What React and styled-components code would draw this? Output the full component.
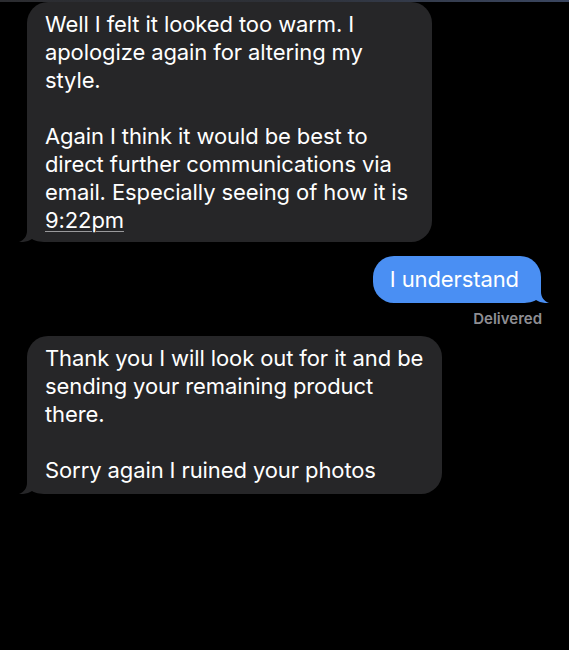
import React from "react";
import styled, { createGlobalStyle } from "styled-components";

const Global = createGlobalStyle`
  html, body { margin: 0; padding: 0; background: #000; }
  body { font-family: Inter, "Noto Sans", sans-serif; -webkit-font-smoothing: antialiased; }
`;

const Screen = styled.div`
  width: 569px;
  height: 650px;
  background: #000;
  display: flex;
  flex-direction: column;
  overflow: hidden;
`;

const TopBar = styled.div`
  height: 2px;
  background: linear-gradient(90deg, #2b2c30 0%, #2e3138 50%, #3a4660 100%);
`;

const Row = styled.div`
  display: flex;
  justify-content: ${(p) => (p.$me ? "flex-end" : "flex-start")};
  padding: ${(p) => (p.$me ? "0 28px 0 0" : "0 0 0 27px")};
  margin-top: ${(p) => p.$top || 0}px;
`;

const Bubble = styled.div`
  position: relative;
  width: ${(p) => (p.$w ? p.$w + "px" : "auto")};
  box-sizing: border-box;
  background: ${(p) => (p.$me ? "#4a8ff3" : "#262628")};
  color: #fff;
  border-radius: 21px;
  padding: ${(p) => p.$pad};
  font-size: 22px;
  line-height: 28px;
  letter-spacing: -0.1px;
  white-space: nowrap;
`;

const Text = styled.span`
  position: relative;
  z-index: 1;
`;

const Tail = styled.svg`
  position: absolute;
  bottom: 0;
  z-index: 0;
  ${(p) => (p.$me ? "right: -8px; transform: scaleX(-1);" : "left: -8px;")}
  width: 28px;
  height: 22px;
`;

const Link = styled.span`
  text-decoration: underline;
  text-decoration-color: #9a9a9c;
  text-decoration-thickness: 1px;
  text-underline-offset: 3px;
`;

const Status = styled.div`
  align-self: flex-end;
  margin: 7px 27px 0 0;
  font-size: 15px;
  line-height: 18px;
  font-weight: 600;
  color: #8e8e93;
`;

const TailShape = ({ me, color }) => (
  <Tail $me={me} viewBox="0 0 28 22">
    <path
      d="M8 0 L8 11 C8 16 5 20 0 22 C5 22.5 10 21 13 19 C16 21 20 22 28 22 L28 0 Z"
      fill={color}
    />
  </Tail>
);

export default function App() {
  return (
    <>
      <Global />
      <Screen>
        <TopBar />
        <Row>
          <Bubble $w={405} $pad="8px 18px 8px 18px">
            <TailShape color="#262628" />
            <Text>
              Well I felt it looked too warm. I<br />
              apologize again for altering my<br />
              style.<br />
              <br />
              Again I think it would be best to<br />
              direct further communications via<br />
              email. Especially seeing of how it is<br />
              <Link>9:22pm</Link>
            </Text>
          </Bubble>
        </Row>
        <Row $me $top={14}>
          <Bubble $me $pad="9px 22px 10px 17px">
            <TailShape me color="#4a8ff3" />
            <Text>I understand</Text>
          </Bubble>
        </Row>
        <Status>Delivered</Status>
        <Row $top={8}>
          <Bubble $w={415} $pad="8px 18px 10px 18px">
            <TailShape color="#262628" />
            <Text>
              Thank you I will look out for it and be<br />
              sending your remaining product<br />
              there.<br />
              <br />
              Sorry again I ruined your photos
            </Text>
          </Bubble>
        </Row>
      </Screen>
    </>
  );
}
